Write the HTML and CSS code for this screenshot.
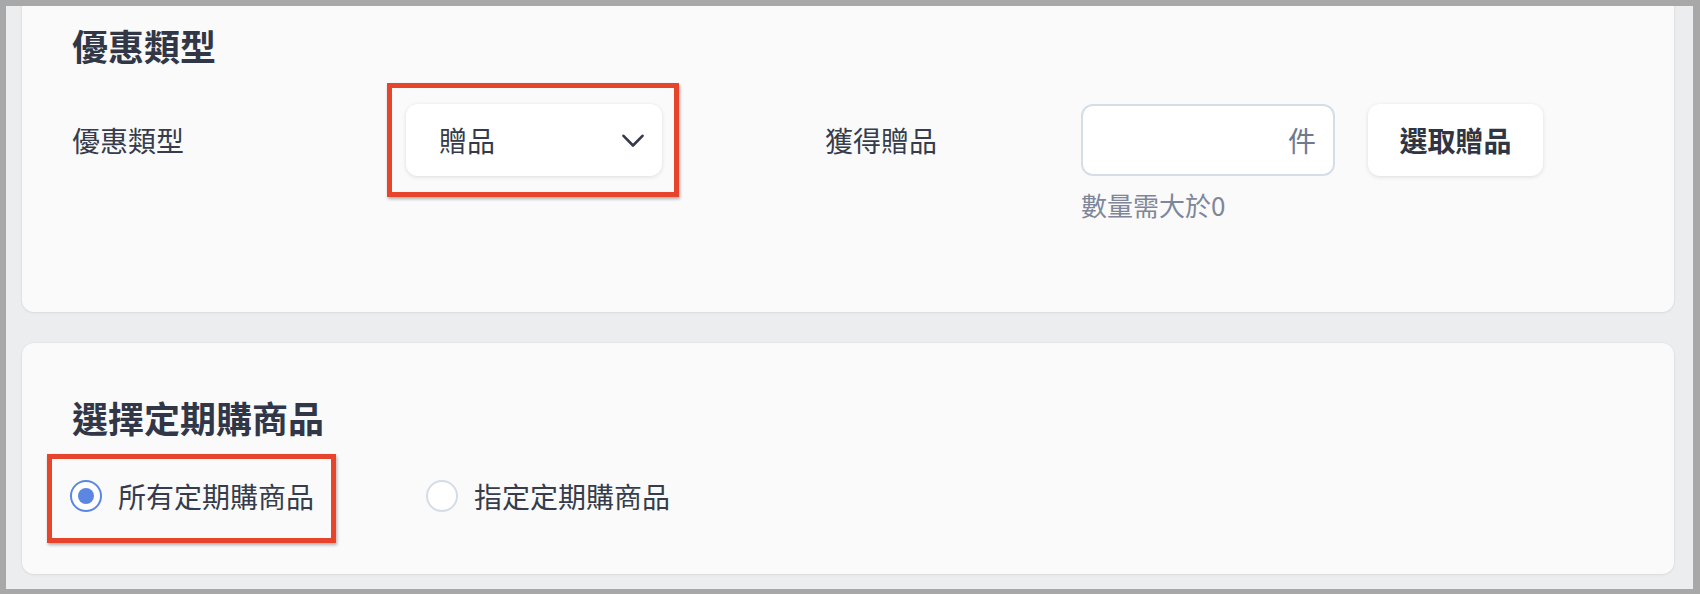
FILE: index.html
```html
<!DOCTYPE html>
<html lang="zh-Hant">
<head>
<meta charset="utf-8">
<title>優惠類型</title>
<link rel="stylesheet" href="styles.css">
</head>
<body>
<div class="frame">
  <div class="page">
    <section class="card card-type">
      <h2 class="card-title">優惠類型</h2>
      <div class="form-row">
        <div class="label label-first">優惠類型</div>
        <div class="select annotated">
          <span>贈品</span>
          <svg class="chevron" width="22" height="14" viewBox="0 0 22 14" aria-hidden="true">
            <polyline points="1.5,1.8 11,11.5 20.5,1.8" fill="none" stroke="#343a4a" stroke-width="2.6" stroke-linecap="round" stroke-linejoin="round"/>
          </svg>
        </div>
        <div class="label label-second">獲得贈品</div>
        <div class="field">
          <div class="input"><span class="unit">件</span></div>
          <div class="helper">數量需大於0</div>
        </div>
        <button class="btn" type="button">選取贈品</button>
      </div>
    </section>
    <section class="card card-products">
      <h2 class="card-title">選擇定期購商品</h2>
      <div class="radio-row">
        <label class="radio-item radio-first annotated">
          <span class="radio checked"></span>
          <span class="radio-label">所有定期購商品</span>
        </label>
        <label class="radio-item">
          <span class="radio"></span>
          <span class="radio-label">指定定期購商品</span>
        </label>
      </div>
    </section>
  </div>
</div>
</body>
</html>
```

FILE: styles.css
```css
*,
*::before,
*::after {
  box-sizing: border-box;
}

html, body {
  margin: 0;
  padding: 0;
  background: #a8a8a8;
}

body {
  font-family: "Noto Sans CJK TC", "Noto Sans", sans-serif;
  color: #343a4a;
}

.frame {
  width: 1700px;
  height: 594px;
  border-style: solid;
  border-color: #a8a8a8;
  border-width: 6px 7px 5px 6px;
  background: #ecedef;
  overflow: hidden;
  position: relative;
}

.page {
  height: 100%;
  display: flex;
  flex-direction: column;
  justify-content: flex-end;
  gap: 31px;
  padding: 0 19px 15px 16px;
}

.card {
  flex-shrink: 0;
  background: #fafafa;
  border-radius: 12px;
  box-shadow: 0 0 0 1px rgba(0, 0, 0, 0.025), 0 1px 3px rgba(0, 0, 0, 0.06);
  padding-left: 50px;
}

.card-type {
  padding-top: 30px;
  padding-bottom: 89px;
}

.card-products {
  padding-top: 50px;
  padding-bottom: 58px;
}

.card-title {
  margin: 0;
  font-size: 36px;
  line-height: 48px;
  font-weight: 700;
  color: #313747;
}

.form-row {
  display: flex;
  align-items: flex-start;
  margin-top: 35px;
}

.label {
  font-size: 28px;
  line-height: 72px;
  height: 72px;
  color: #363c4c;
}

.label-first {
  width: 334px;
}

.label-second {
  width: 256px;
  margin-left: 163px;
}

.select {
  width: 256px;
  height: 72px;
  background: #ffffff;
  border-radius: 12px;
  box-shadow: 0 1px 4px rgba(0, 0, 0, 0.12);
  display: flex;
  align-items: center;
  justify-content: space-between;
  padding: 0 18px 0 33px;
  font-size: 28px;
  color: #343a4a;
}

.chevron {
  display: block;
  margin-top: 2px;
}

.field {
  width: 254px;
  display: flex;
  flex-direction: column;
}

.input {
  height: 72px;
  background: #ffffff;
  border: 2px solid #d5dde7;
  border-radius: 12px;
  display: flex;
  align-items: center;
  justify-content: flex-end;
  padding-right: 17px;
}

.unit {
  font-size: 28px;
  color: #6f7a8e;
}

.helper {
  margin-top: 11px;
  font-size: 26px;
  line-height: 36px;
  color: #7e879a;
}

.btn {
  margin-left: 33px;
  width: 175px;
  height: 72px;
  border: none;
  background: #ffffff;
  border-radius: 12px;
  box-shadow: 0 1px 4px rgba(0, 0, 0, 0.12);
  font-family: inherit;
  font-size: 28px;
  font-weight: 700;
  color: #2f3543;
  padding: 0;
}

.radio-row {
  display: flex;
  align-items: center;
  height: 40px;
  margin-top: 35px;
  margin-left: -2px;
}

.radio-item {
  display: flex;
  align-items: center;
  height: 40px;
}

.radio-first {
  width: 356px;
}

.radio {
  width: 32px;
  height: 32px;
  border-radius: 50%;
  border: 2px solid #d4dce6;
  background: #ffffff;
  flex-shrink: 0;
  position: relative;
}

.radio.checked {
  border-color: #5b87e3;
}

.radio.checked::after {
  content: "";
  position: absolute;
  left: 6px;
  top: 6px;
  width: 16px;
  height: 16px;
  border-radius: 50%;
  background: #5b87e3;
}

.radio-label {
  margin-left: 16px;
  font-size: 28px;
  color: #363c4c;
}

.annotated {
  position: relative;
}

.annotated::before {
  content: "";
  position: absolute;
  border: 5px solid #e6452b;
  box-shadow: 1px 2px 3px rgba(0, 0, 0, 0.3);
  pointer-events: none;
}

.select.annotated::before {
  top: -21px;
  left: -19px;
  right: -17px;
  bottom: -21px;
}

.radio-first.annotated::before {
  top: -22px;
  left: -23px;
  width: 289px;
  height: 89px;
}
```
